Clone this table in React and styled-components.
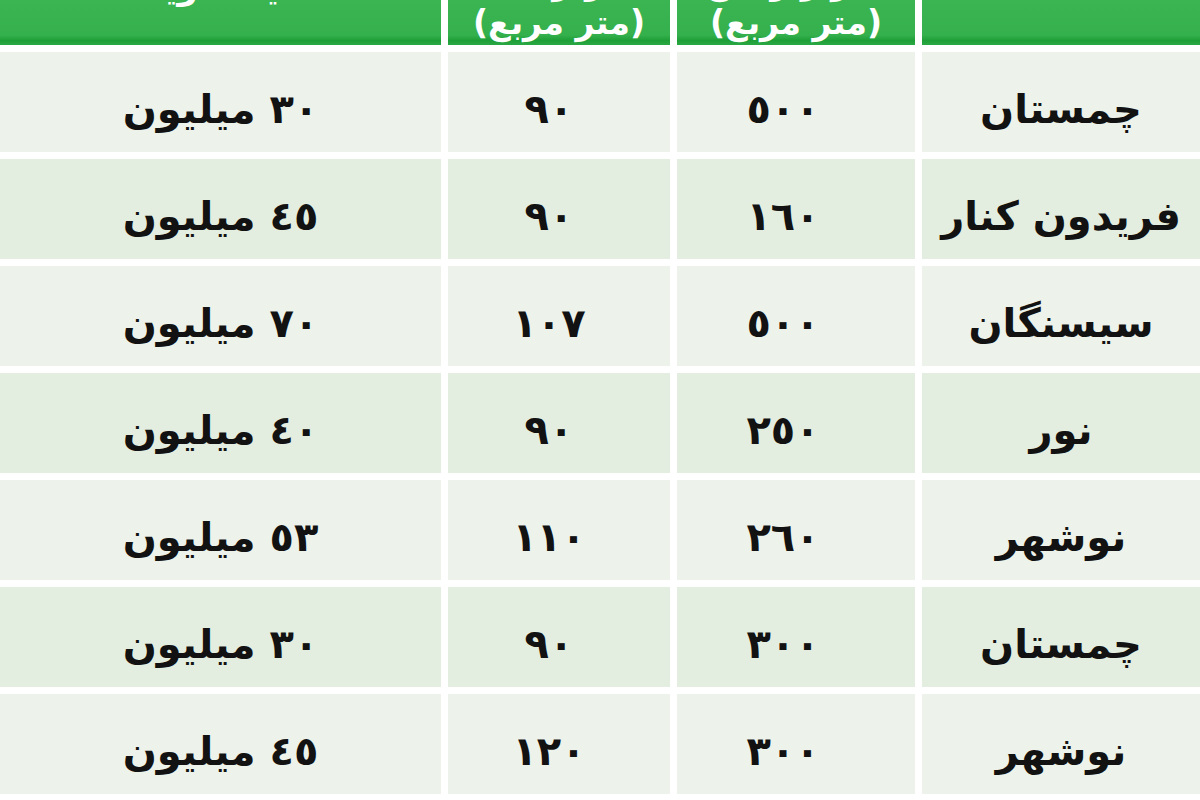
import React from 'react'
import styled, { createGlobalStyle } from 'styled-components'

const GlobalStyle = createGlobalStyle`
  html, body {
    margin: 0;
    padding: 0;
    background: #ffffff;
  }
  body {
    font-family: "DejaVu Sans", "Noto Sans", sans-serif;
  }
`

const rows = [
    { place: 'چمستان', land: '٥٠٠', built: '٩٠', price: '٣٠ میلیون' },
    { place: 'فریدون کنار', land: '١٦٠', built: '٩٠', price: '٤٥ میلیون' },
    { place: 'سیسنگان', land: '٥٠٠', built: '١٠٧', price: '٧٠ میلیون' },
    { place: 'نور', land: '٢٥٠', built: '٩٠', price: '٤٠ میلیون' },
    { place: 'نوشهر', land: '٢٦٠', built: '١١٠', price: '٥٣ میلیون' },
    { place: 'چمستان', land: '٣٠٠', built: '٩٠', price: '٣٠ میلیون' },
    { place: 'نوشهر', land: '٣٠٠', built: '١٢٠', price: '٤٥ میلیون' },
]

const Page = styled.div`
    width: 1200px;
    height: 800px;
    overflow: hidden;
    background: #ffffff;
`

const Table = styled.div`
    display: grid;
    grid-template-columns: 278px 238px 222px 1fr;
    grid-template-rows: 45px;
    grid-auto-rows: 100px;
    column-gap: 7px;
    row-gap: 7px;
    direction: rtl;
`

const HeadCell = styled.div`
    height: 45px;
    overflow: hidden;
    display: flex;
    flex-direction: column;
    justify-content: flex-end;
    align-items: center;
    background: linear-gradient(to bottom, #3bb552 0%, #34b04c 78%, #1f9f38 90%, #2aa844 100%);
    color: #ffffff;
    font-weight: bold;
    font-size: 33px;
    line-height: 40px;
    padding-bottom: ${p => p.lift}px;
    box-sizing: border-box;
`

const HeadLine = styled.span`
    white-space: nowrap;
`

const Cell = styled.div`
    display: flex;
    align-items: center;
    justify-content: center;
    padding-top: 14px;
    padding-right: ${p => p.shift || 0}px;
    box-sizing: border-box;
    background: ${p => (p.alt ? '#e4eee0' : '#edf2ea')};
    color: #121212;
    font-weight: bold;
    font-size: 40px;
    white-space: nowrap;
`

const Row = styled.div`
    display: contents;
`

export default function App() {
    return (
        <Page>
            <GlobalStyle />
            <Table>
                <Row>
                    <HeadCell lift={0} />
                    <HeadCell lift={2}>
                        <HeadLine>متراژ زمین</HeadLine>
                        <HeadLine>(متر مربع)</HeadLine>
                    </HeadCell>
                    <HeadCell lift={2}>
                        <HeadLine>زیربنا</HeadLine>
                        <HeadLine>(متر مربع)</HeadLine>
                    </HeadCell>
                    <HeadCell lift={37}>
                        <HeadLine>قیمت ویلا</HeadLine>
                    </HeadCell>
                </Row>
                {rows.map((r, i) => (
                    <Row key={i}>
                        <Cell alt={i % 2 === 1}>{r.place}</Cell>
                        <Cell alt={i % 2 === 1} shift={26}>{r.land}</Cell>
                        <Cell alt={i % 2 === 1} shift={20}>{r.built}</Cell>
                        <Cell alt={i % 2 === 1}>{r.price}</Cell>
                    </Row>
                ))}
            </Table>
        </Page>
    )
}
